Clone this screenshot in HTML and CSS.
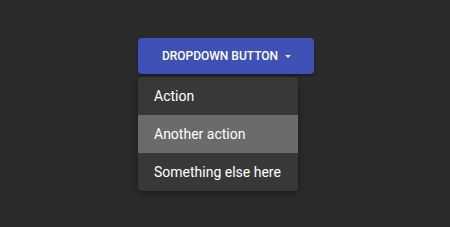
FILE: index.html
```html
<!DOCTYPE html>
<html lang="en">
<head>
    <meta charset="UTF-8">
    <title>Dropdown</title>
    <link rel="stylesheet" href="styles.css">
</head>
<body>
    <div class="dropdown">
        <button class="dropdown-toggle">Dropdown button <span class="caret"></span></button>
        <div class="dropdown-menu">
            <a href="#" class="dropdown-item">Action</a>
            <a href="#" class="dropdown-item active">Another action</a>
            <a href="#" class="dropdown-item">Something else here</a>
        </div>
    </div>
</body>
</html>
```

FILE: styles.css
```css
body {
    margin: 0;
    height: 227px;
    background: #2a2a2a;
    font-family: Roboto, "Liberation Sans", sans-serif;
    overflow: hidden;
}

.dropdown {
    padding: 38px 0 0 138px;
}

.dropdown-toggle {
    display: flex;
    align-items: center;
    justify-content: center;
    gap: 7px;
    width: 176px;
    height: 36px;
    padding: 0 0 0 1px;
    border: none;
    border-radius: 4px;
    background: #3f51b5;
    color: #ffffff;
    font-family: inherit;
    font-size: 12px;
    font-weight: 500;
    text-transform: uppercase;
    box-shadow: 0 2px 2px rgb(0 0 0 / 0.3);
}

.caret {
    width: 0;
    height: 0;
    border-left: 3px solid transparent;
    border-right: 3px solid transparent;
    border-top: 3px solid #e8eaf6;
}

.dropdown-menu {
    margin-top: 3px;
    width: 160px;
    background: #383838;
    border-radius: 4px;
    overflow: hidden;
    box-shadow: 0 2px 6px rgb(0 0 0 / 0.35);
}

.dropdown-item {
    display: block;
    height: 38px;
    line-height: 38px;
    padding: 0 16px;
    color: #ffffff;
    font-size: 14px;
    text-decoration: none;
    white-space: nowrap;
}

.dropdown-item.active {
    background: #6b6b6b;
}
```
